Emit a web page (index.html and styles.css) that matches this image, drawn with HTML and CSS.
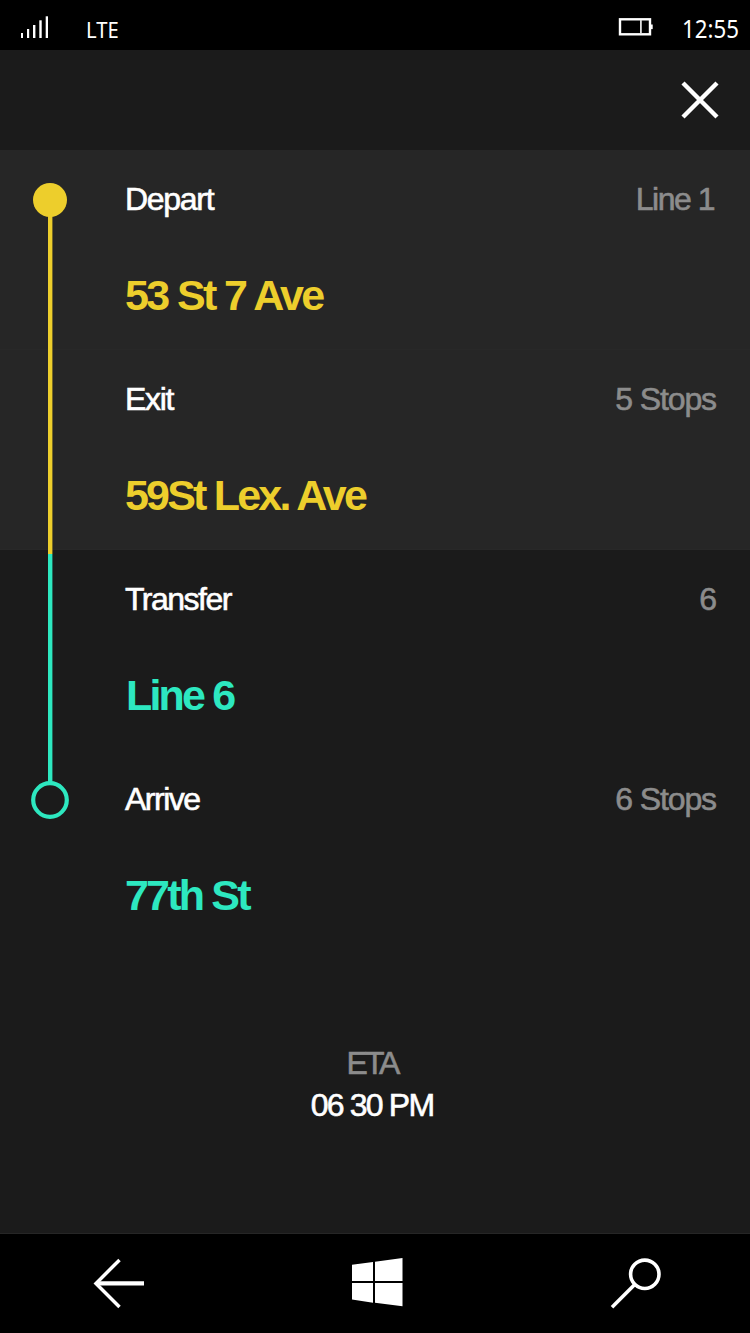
FILE: index.html
```html
<!DOCTYPE html>
<html lang="en">
<head>
<meta charset="utf-8">
<title>Trip</title>
<link rel="stylesheet" href="styles.css">
</head>
<body>
<div class="phone">
  <header class="status">
    <svg class="signal" width="30" height="24" viewBox="0 0 30 24" fill="#fff">
      <rect x="1" y="18" width="2" height="5"/>
      <rect x="7" y="14" width="2.2" height="9"/>
      <rect x="13" y="10" width="2.4" height="13"/>
      <rect x="19.3" y="5.3" width="2.4" height="17.7"/>
      <rect x="25.7" y="1.3" width="2.3" height="21.7"/>
    </svg>
    <span class="network">LTE</span>
    <svg class="battery" width="36" height="20" viewBox="0 0 36 20">
      <rect x="2" y="2.3" width="30" height="15" fill="none" stroke="#fff" stroke-width="2.4"/>
      <rect x="22" y="3" width="1.8" height="13" fill="#ddd"/>
      <rect x="32.5" y="7.5" width="2.2" height="4.6" fill="#fff"/>
    </svg>
    <span class="clock">12:55</span>
  </header>

  <div class="topbar">
    <svg width="38" height="38" viewBox="0 0 38 38" stroke="#fff" stroke-width="4.4">
      <path d="M2 2L36 36M36 2L2 36"/>
    </svg>
  </div>

  <main class="trip">
    <svg class="rail" width="38" height="640" viewBox="0 0 38 640" fill="none">
      <circle cx="19" cy="20" r="17" fill="#edce2c"/>
      <rect x="17" y="30" width="4.4" height="344" fill="#edce2c"/>
      <rect x="17" y="374" width="4.4" height="228" fill="#2de8c0"/>
      <circle cx="19" cy="620" r="16.8" stroke="#2de8c0" stroke-width="4.2"/>
    </svg>
    <section class="step step-lit">
      <div class="meta"><span class="label">Depart</span><span class="info info-line">Line 1</span></div>
      <h2 class="place yellow">53 St 7 Ave</h2>
    </section>
    <section class="step step-lit">
      <div class="meta"><span class="label">Exit</span><span class="info">5 Stops</span></div>
      <h2 class="place place-tight yellow">59St Lex. Ave</h2>
    </section>
    <section class="step">
      <div class="meta"><span class="label label-tight">Transfer</span><span class="info">6</span></div>
      <h2 class="place place-tight place-inset teal">Line 6</h2>
    </section>
    <section class="step">
      <div class="meta"><span class="label label-tight">Arrive</span><span class="info">6 Stops</span></div>
      <h2 class="place place-tight teal">77th St</h2>
    </section>
  </main>

  <section class="eta">
    <div class="eta-label">ETA</div>
    <div class="eta-time">06 30 PM</div>
  </section>

  <nav class="navbar">
    <svg width="52" height="52" viewBox="0 0 52 52" fill="none" stroke="#fff" stroke-width="3.5">
      <path d="M27.5 2L4 25.4L27.5 49"/><path d="M4 25.4H52" stroke-width="4.2"/>
    </svg>
    <svg class="home" width="52" height="50" viewBox="0 0 52 50" fill="#fff">
      <path d="M1 7.8L22 5V24H1zM24 4.7L51.5 1V24H24zM1 26H22V45.7L1 42.5zM24 26H51.5V49.3L24 45.7z"/>
    </svg>
    <svg width="52" height="52" viewBox="0 0 52 52" fill="none" stroke="#fff" stroke-width="3.6">
      <circle cx="34.8" cy="16.3" r="14.2"/><path d="M24.7 26.5L2 49.2"/>
    </svg>
  </nav>
</div>
</body>
</html>
```

FILE: styles.css
```css
body {
  margin: 0;
  background: #000;
}

.phone {
  display: flex;
  flex-direction: column;
  width: 750px;
  height: 1333px;
  overflow: hidden;
  background: #1b1b1b;
  color: #fff;
  font-family: "Liberation Sans", Arial, sans-serif;
}

.status {
  display: flex;
  align-items: flex-start;
  box-sizing: border-box;
  height: 50px;
  padding: 0 11px 0 20px;
  background: #000;
  font-family: "Noto Sans", sans-serif;
}

.signal {
  margin-top: 15px;
}

.network {
  margin: 14px 0 0 36px;
  font-size: 22px;
  line-height: 30px;
  transform: scaleX(0.92);
  transform-origin: left;
}

.battery {
  margin: 17px 28px 0 auto;
}

.clock {
  width: 57px;
  margin-top: 14px;
  font-size: 24.5px;
  line-height: 30px;
  white-space: nowrap;
  transform: scaleX(0.91);
  transform-origin: left;
}

.topbar {
  display: flex;
  align-items: center;
  justify-content: flex-end;
  box-sizing: border-box;
  height: 100px;
  padding-right: 31px;
}

.trip {
  position: relative;
}

.rail {
  position: absolute;
  left: 31px;
  top: 30px;
}

.step {
  display: flex;
  flex-direction: column;
  gap: 51px;
  box-sizing: border-box;
  height: 200px;
  padding: 29px 34px 0 125px;
}

.step-lit {
  background: #262626;
  box-shadow: inset 0 -1px #282828;
}

.meta {
  display: flex;
  justify-content: space-between;
  font-size: 32px;
  line-height: 40px;
}

.label,
.info,
.eta {
  -webkit-text-stroke: 0.6px currentColor;
}

.label {
  letter-spacing: -1.3px;
}

.label-tight {
  letter-spacing: -1.5px;
}

.info {
  color: #8c8c8c;
  letter-spacing: -1.1px;
}

.info-line {
  padding-right: 2px;
  letter-spacing: -1.5px;
}

.place {
  margin: 0;
  font-size: 43px;
  font-weight: 700;
  line-height: 50px;
  letter-spacing: -2.6px;
}

.place-tight {
  letter-spacing: -2.8px;
}

.place-inset {
  padding-left: 1px;
}

.yellow {
  color: #edce2c;
}

.teal {
  color: #2de8c0;
}

.eta {
  display: flex;
  flex-direction: column;
  align-items: center;
  padding: 92px 6px 0 0;
  font-size: 32px;
  line-height: 42px;
}

.eta-label {
  color: #8c8c8c;
  letter-spacing: -3px;
}

.eta-time {
  letter-spacing: -1.8px;
}

.navbar {
  display: flex;
  align-items: center;
  justify-content: space-between;
  box-sizing: border-box;
  height: 100px;
  margin-top: auto;
  padding: 0 88px 0 92px;
  border-top: 1px solid #262626;
  background: #000;
}

.home {
  margin-bottom: 3px;
}
```
